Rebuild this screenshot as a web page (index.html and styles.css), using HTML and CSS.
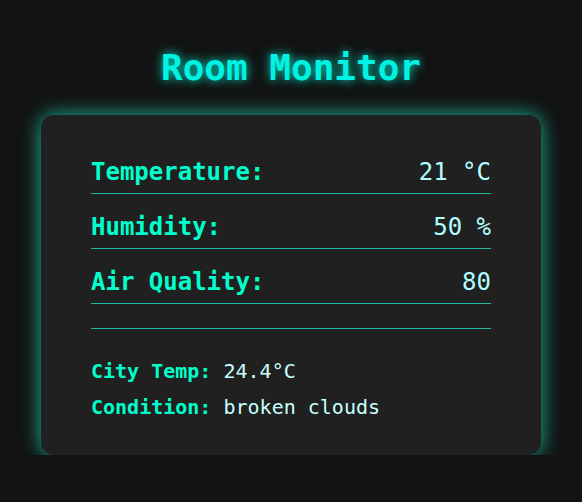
FILE: index.html
```html
<!DOCTYPE html>
<html lang="en">
<head>
<meta charset="utf-8">
<title>Room Monitor</title>
<link rel="stylesheet" href="styles.css">
</head>
<body>
<main class="page">
  <h1 class="title">Room Monitor</h1>
  <section class="card">
    <div class="rows">
      <div class="row"><span class="label">Temperature:</span><span class="value">21 °C</span></div>
      <div class="row"><span class="label">Humidity:</span><span class="value">50 %</span></div>
      <div class="row"><span class="label">Air Quality:</span><span class="value">80</span></div>
    </div>
    <div class="divider"></div>
    <div class="weather">
      <p class="wline"><span class="wlabel">City Temp:</span> <span class="wvalue">24.4°C</span></p>
      <p class="wline"><span class="wlabel">Condition:</span> <span class="wvalue">broken clouds</span></p>
    </div>
  </section>
</main>
</body>
</html>
```
FILE: styles.css
```css
html, body {
  margin: 0;
  padding: 0;
  background: #121212;
}
body {
  font-family: "DejaVu Sans Mono", "Liberation Mono", monospace;
  color: #b0ffff;
}
.page {
  display: flex;
  flex-direction: column;
  align-items: center;
  padding-top: 47px;
}
.title {
  margin: 0;
  font-size: 36px;
  font-weight: bold;
  line-height: 42px;
  color: #00f2e2;
  text-shadow: 0 0 8px rgba(0, 255, 230, 0.7), 0 0 16px rgba(0, 255, 220, 0.35);
}
.card {
  margin-top: 26px;
  width: 500px;
  box-sizing: border-box;
  padding: 34px 50px 36px;
  background: #202020;
  border-radius: 13px;
  box-shadow: 0 0 20px #1abc9c;
}
.rows {
  display: flex;
  flex-direction: column;
  gap: 10px;
}
.row {
  display: flex;
  justify-content: space-between;
  padding: 9px 0 7px;
  font-size: 24px;
  line-height: 28px;
  border-bottom: 1px solid #1fb89c;
}
.label {
  font-weight: bold;
  color: #00ffcc;
}
.value {
  color: #b0ffff;
}
.divider {
  border-top: 1px solid #1fb89c;
  margin: 24px 0 31px;
}
.weather {
  display: flex;
  flex-direction: column;
  gap: 13px;
}
.wline {
  margin: 0;
  font-size: 20px;
  line-height: 23px;
}
.wlabel {
  font-weight: bold;
  color: #00ffcc;
}
.wvalue {
  color: #c8ffff;
}
```
